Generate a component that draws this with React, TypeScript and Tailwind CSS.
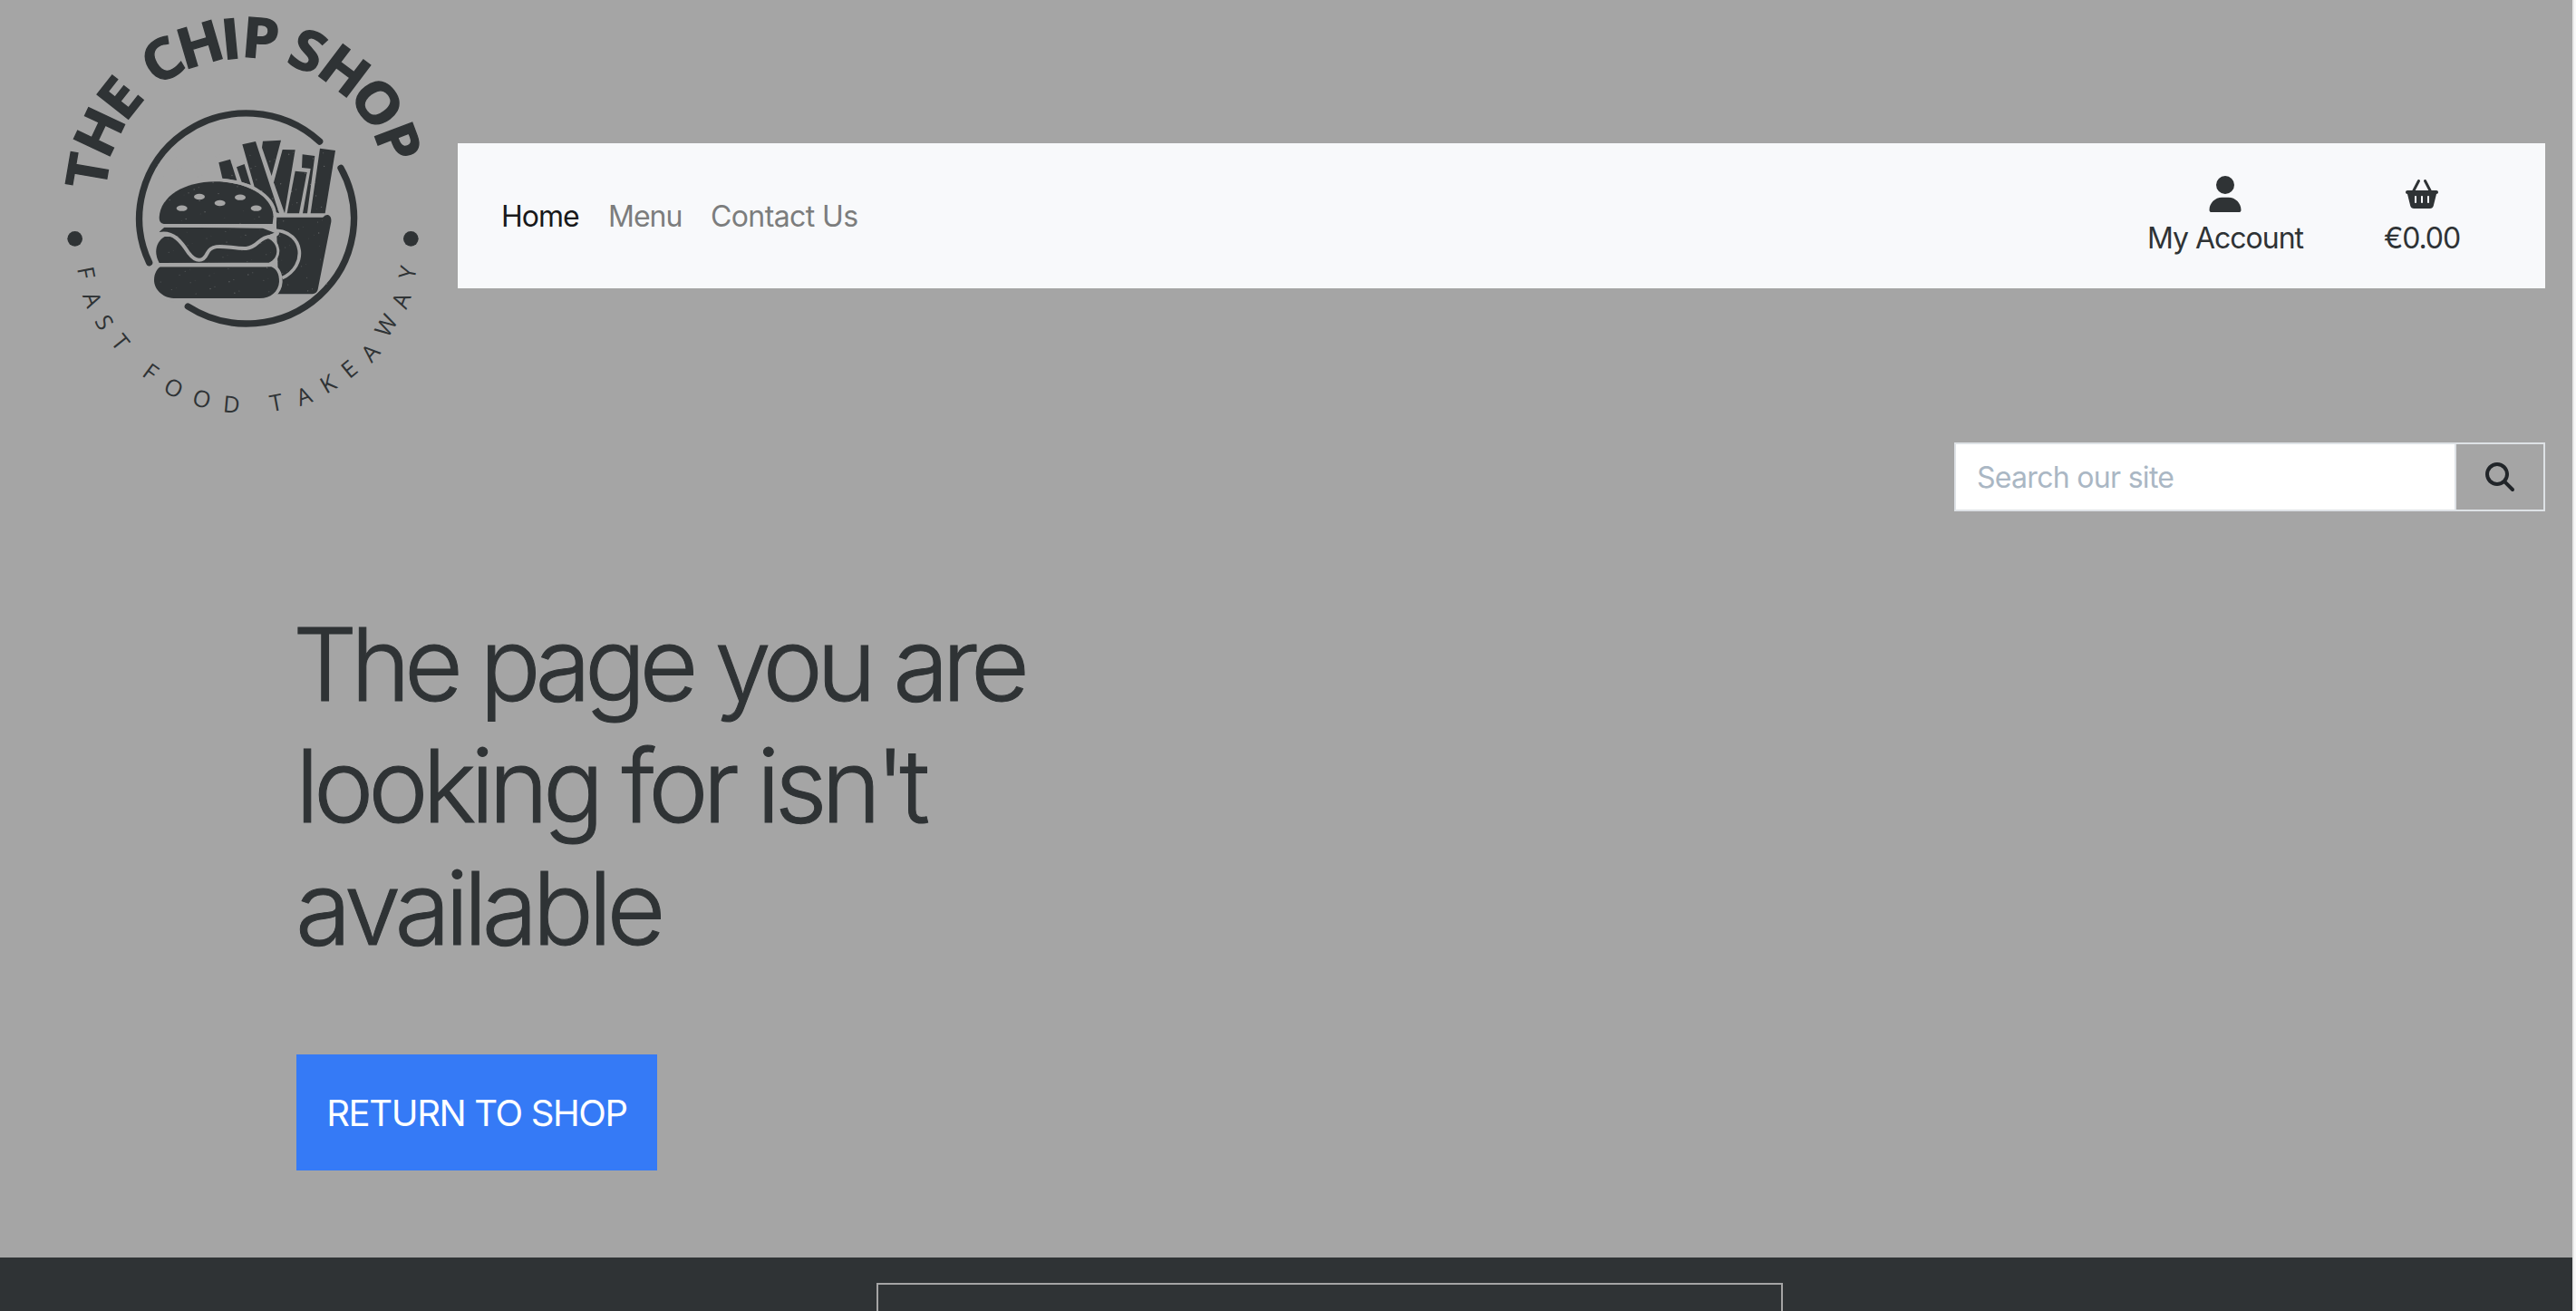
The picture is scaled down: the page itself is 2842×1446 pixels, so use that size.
import React from 'react';
import { FaUser, FaBasketShopping, FaMagnifyingGlass } from 'react-icons/fa6';

type Glyph = [string, number, number, number];

// letter, baseline centre x / y, rotation
const title: Glyph[] = [
  ['T', 236, 577, -80.3],
  ['H', 268, 464, -64.8],
  ['E', 328, 365, -51.7],
  ['C', 450, 255, -31],
  ['H', 560, 210, -16.3],
  ['I', 650, 194, -5.5],
  ['P', 738, 192, 4.7],
  ['S', 873, 228, 23.2],
  ['H', 981, 286, 37.2],
  ['O', 1077, 380, 53],
  ['P', 1136, 493, 69.3],
];

// letter, centre x / y
const tagline: [string, number, number][] = [
  ['F', 165, 902], ['A', 186, 991], ['S', 225, 1067], ['T', 279, 1133],
  ['F', 378, 1231], ['O', 455, 1284], ['O', 548, 1320], ['D', 646, 1338],
  ['T', 794, 1332], ['A', 886, 1311], ['K', 966, 1270], ['E', 1036, 1221],
  ['A', 1106, 1167], ['W', 1158, 1077], ['A', 1208, 994], ['Y', 1229, 902],
];

const tilt = (x: number, y: number) => (Math.atan2(694 - x, y - 800) * 180) / Math.PI;

const specks = Array.from({ length: 170 }, (_, i) => ({
  x: 400 + ((i * 137.51) % 565),
  y: 500 + ((i * 89.37 + (i % 7) * 31) % 475),
  r: 1 + (i % 3) * 0.5,
}));

function Logo() {
  const ink = '#2f3335';
  const bg = '#a5a5a5';
  return (
    <svg viewBox="0 0 1380 1428" className="ml-10 h-[476px] w-[460px] shrink-0" fill={ink}>
      {title.map(([c, x, y, a], i) => (
        <text
          key={i}
          transform={`translate(${x} ${y}) rotate(${a}) scale(1.06 1)`}
          textAnchor="middle"
          stroke={ink}
          strokeWidth="4"
          className="font-['Open_Sans',sans-serif] text-[185px] font-bold"
        >
          {c}
        </text>
      ))}
      {tagline.map(([c, x, y], i) => (
        <text
          key={i}
          transform={`translate(${x} ${y}) rotate(${tilt(x, y)})`}
          y="27"
          textAnchor="middle"
          className="font-['Open_Sans',sans-serif] text-[76px] font-normal"
        >
          {c}
        </text>
      ))}
      <circle cx="128" cy="790" r="25" />
      <circle cx="1240" cy="790" r="25" />
      <g fill="none" stroke={ink} strokeWidth="22" strokeLinecap="round">
        <path d="M374 869 A355 348 0 0 1 938 468" />
        <path d="M1008 556 A355 348 0 0 1 502 1014" />
      </g>
      {/* fries */}
      <path d="M604 538 L642 527 L664 597 L616 590Z" />
      <path d="M663 553 L689 543 L710 612 L680 602Z" />
      <path d="M682 478 L726 468 L804 706 L785 700 L770 655 L722 618Z" />
      <path d="M750 467 L810 464 L779 582 L747 488Z" />
      <path d="M815 495 L857 496 L822 706 L786 604Z" />
      <path d="M857 566 L896 570 L870 706 L830 706Z" />
      <path d="M881 511 L922 516 L897 706 L882 706 L908 558 L879 555Z" />
      <path d="M939 491 L990 498 L956 706 L908 706Z" />
      {/* fries box */}
      <path d="M794 719 L948 719 Q956 709 966 711 Q978 716 976 734 L932 958 Q929 972 914 973 L792 973 L800 900Z" />
      <path d="M755 756 Q775 764 795 763 C885 768 900 880 814 920" fill="none" stroke={bg} strokeWidth="11" />
      {/* burger */}
      <g stroke={bg} strokeWidth="20" strokeLinejoin="round" paintOrder="stroke">
        <path d="M450 883 L778 883 C795 890 804 905 804 932 C802 965 775 987 740 987 L455 987 C415 985 390 955 390 927 C390 905 400 890 410 883Z" strokeWidth="22" />
        <path d="M407 870 C388 835 396 800 425 783 L765 788 C800 800 810 850 770 869Z" strokeWidth="18" />
      </g>
      <path d="M407 767 L424 752 L750 755 L788 770 L745 788 L700 822 L600 812 L540 862 L470 783Z" />
      <path d="M408 774 C455 766 480 800 505 838 C528 868 552 868 566 838 C584 798 640 824 695 822 C735 818 735 785 775 782 C795 779 803 772 795 768" fill="none" stroke={bg} strokeWidth="12" />
      <path d="M412 746 L786 748" stroke={bg} strokeWidth="11" />
      <path d="M402 877 L762 877 Q785 875 795 862" stroke={bg} strokeWidth="11" fill="none" />
      <path
        d="M407 720 C410 650 490 601 592 601 C700 601 780 650 785 715 L782 741 L422 741 Q407 739 407 720Z"
      />
      <path d="M618 596 C725 607 791 655 791 718 L789 752" fill="none" stroke={bg} strokeWidth="10" />
      <path d="M790 713 L948 713" stroke={bg} strokeWidth="10" strokeLinecap="round" />
      <g fill={bg}>
        <ellipse cx="482" cy="689" rx="18" ry="9.500" />
        <ellipse cx="540" cy="651" rx="18" ry="9.500" />
        <ellipse cx="608" cy="672" rx="18" ry="9.500" />
        <ellipse cx="675" cy="653" rx="18" ry="9.500" />
        <ellipse cx="728" cy="689" rx="18" ry="9.500" />
      </g>
      <g fill={bg} opacity="0.45">
        {specks.map((s, i) => (
          <circle key={i} cx={s.x} cy={s.y} r={s.r} />
        ))}
      </g>
    </svg>
  );
}

export default function App() {
  return (
    <div className="flex h-[1446px] w-[2842px] overflow-hidden bg-[#f8f8f8] font-['Inter',sans-serif] text-[#2f3335]">
      <div className="flex w-[2838px] shrink-0 flex-col bg-[#a5a5a5]">
        <header className="flex shrink-0 items-center">
          <Logo />
          <nav className="ml-[5px] flex h-[160px] w-[2303px] items-center justify-between bg-[#f8f9fb] whitespace-nowrap">
            <ul className="flex pt-[2px] pl-12 text-[32px] leading-[48px] tracking-[-1px]">
              <li className="w-[118px] text-[#18191a]">Home</li>
              <li className="w-[113px] text-[#7c7d7d]">Menu</li>
              <li className="tracking-[-0.6px] text-[#7c7d7d]">Contact Us</li>
            </ul>
            <ul className="flex pt-[4px] text-[32px] leading-[48px] tracking-[-1px]">
              <li className="flex w-[240px] flex-col items-center">
                <FaUser className="h-10 w-9" />
                <p className="mt-[5px]">My Account</p>
              </li>
              <li className="mr-[76px] ml-[37px] flex w-[120px] flex-col items-center pt-1">
                <FaBasketShopping className="h-8 w-9" />
                <p className="mt-[9px] tracking-[-1.1px]">€0.00</p>
              </li>
            </ul>
          </nav>
        </header>

        <form className="mt-3 ml-[2156px] flex h-[76px] w-[652px] shrink-0 border-2 border-[#dee2e6]">
          <div className="flex w-[552px] items-center border-r-2 border-[#dee2e6] bg-white pt-[2px] pl-[23px] text-[32px] tracking-[-0.7px] whitespace-nowrap text-[#aab7c4]">
            Search our site
          </div>
          <button type="button" className="flex flex-1 items-center justify-center text-[#212529]">
            <FaMagnifyingGlass className="size-8" />
          </button>
        </form>

        <main className="mt-[101px] ml-[327px] flex shrink-0 flex-col items-start whitespace-nowrap">
          <h1 className="text-[112px] leading-[134.4px] font-light [-webkit-text-stroke:1px]">
            <span className="-ml-1 block tracking-[-7.1px] [word-spacing:1px]">The page you are</span>
            <span className="-ml-px block tracking-[-6.2px]">looking for isn't</span>
            <span className="-ml-px block tracking-[-5.8px]">available</span>
          </h1>
          <a className="mt-[95px] flex h-32 w-[398px] items-center justify-center bg-[#357af6] pt-[2px] text-[40px] tracking-[-1.35px] text-white">
            RETURN TO SHOP
          </a>
        </main>

        <footer className="mt-24 flex flex-1 bg-[#2f3335] pt-7">
          <div className="ml-[967px] h-[60px] w-[1000px] border-2 border-[#a5a5a5]" />
        </footer>
      </div>
      <div className="w-[2px] bg-[#e8e8e8]" />
    </div>
  );
}
